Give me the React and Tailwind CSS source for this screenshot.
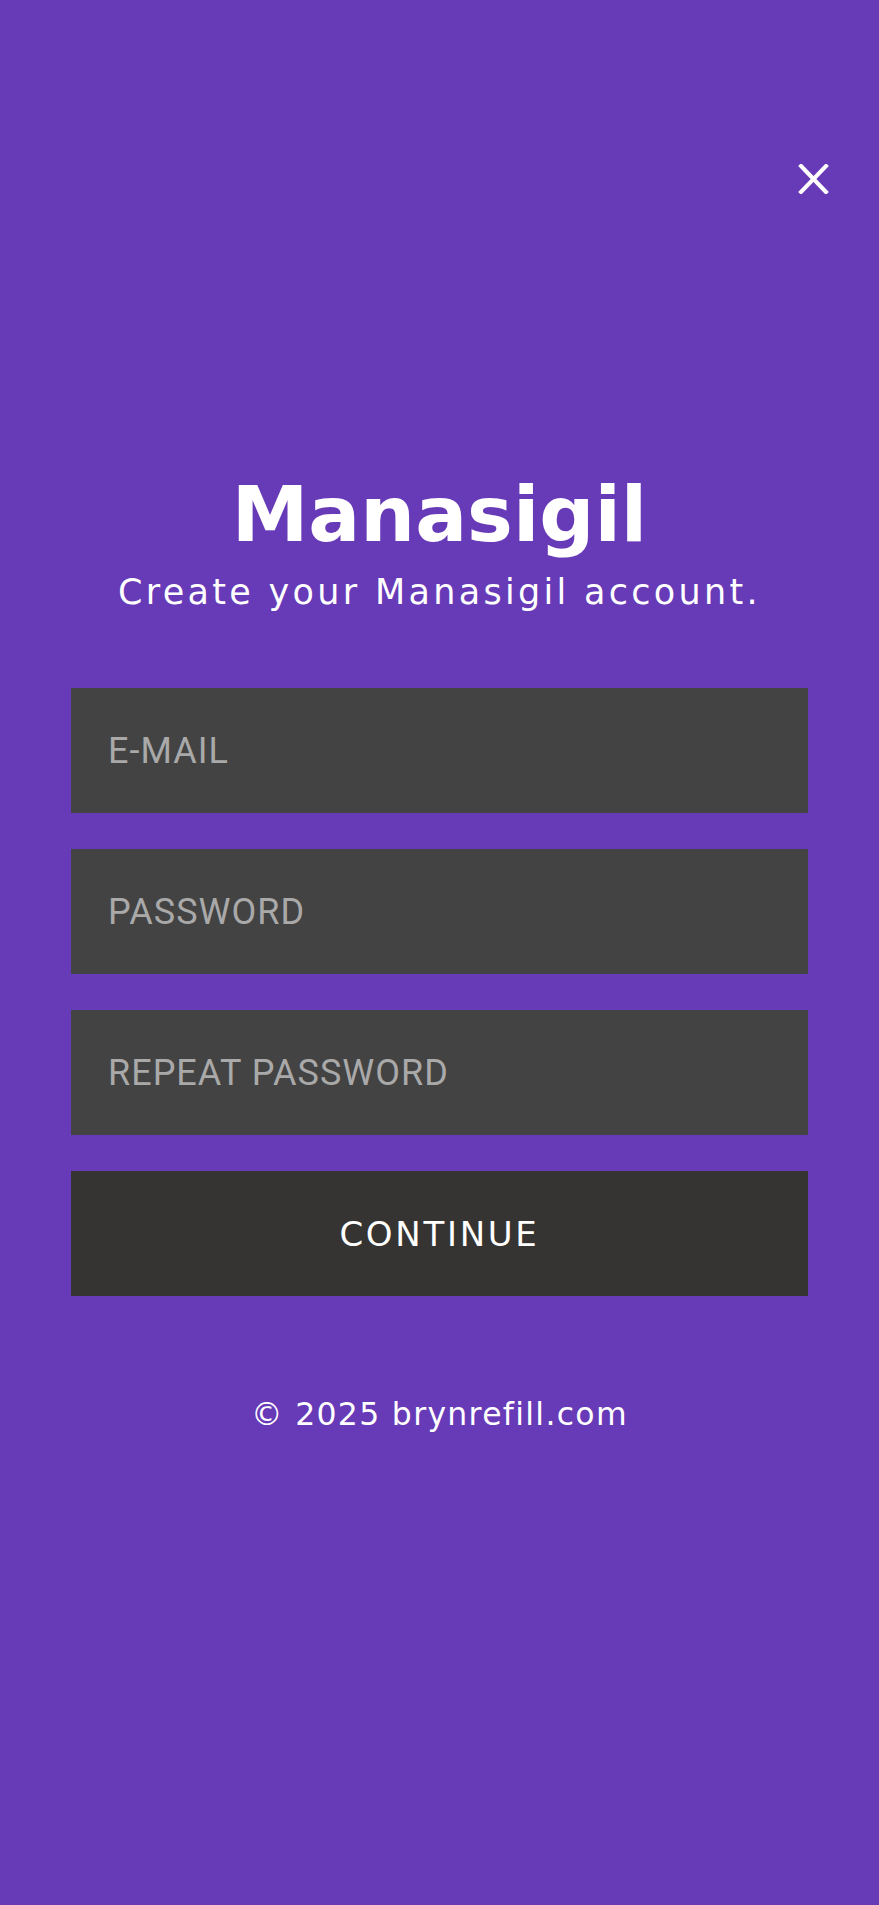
import { useState } from 'react'

export default function App() {
  const [email, setEmail]       = useState('')
  const [password, setPassword] = useState('')
  const [repeat, setRepeat]     = useState('')

  const inputCls =
    "block w-full h-[125px] bg-[#434343] px-[37px] text-[36px] tracking-[1px] text-white outline-none placeholder:text-[#a9a9a9] font-['Roboto',sans-serif]"

  return (
    <div className="min-h-screen w-full bg-[#673ab7] flex flex-col font-['DejaVu_Sans',sans-serif] text-white">
      {/* close */}
      <div className="flex justify-end pt-[164px] pr-[50px]">
        <button aria-label="Close" className="w-[31px] h-[30px]">
          <svg width="31" height="30" viewBox="0 0 31 30" fill="none" stroke="white" strokeWidth="4" strokeLinecap="square">
            <path d="M3 2 L28 28 M28 2 L3 28" />
          </svg>
        </button>
      </div>

      <h1 className="mt-[282px] text-center text-[77px] leading-none font-bold">Manasigil</h1>
      <p className="mt-[22px] text-center text-[35px] leading-none tracking-[3.3px]">
        Create your Manasigil account.
      </p>

      <form className="mt-[78px] mx-[71px] flex flex-col gap-[36px]" onSubmit={e => e.preventDefault()}>
        <input type="email" placeholder="E-MAIL" value={email}
          onChange={e => setEmail(e.target.value)} className={inputCls} />
        <input type="password" placeholder="PASSWORD" value={password}
          onChange={e => setPassword(e.target.value)} className={inputCls} />
        <input type="password" placeholder="REPEAT PASSWORD" value={repeat}
          onChange={e => setRepeat(e.target.value)} className={inputCls} />
        <button type="submit"
          className="h-[125px] w-full bg-[#363432] text-white text-[34px] tracking-[2.7px] leading-none">
          CONTINUE
        </button>
      </form>

      <p className="mt-[103px] text-center text-[31.5px] leading-none tracking-[1.3px]">
        © 2025 brynrefill.com
      </p>
    </div>
  )
}
